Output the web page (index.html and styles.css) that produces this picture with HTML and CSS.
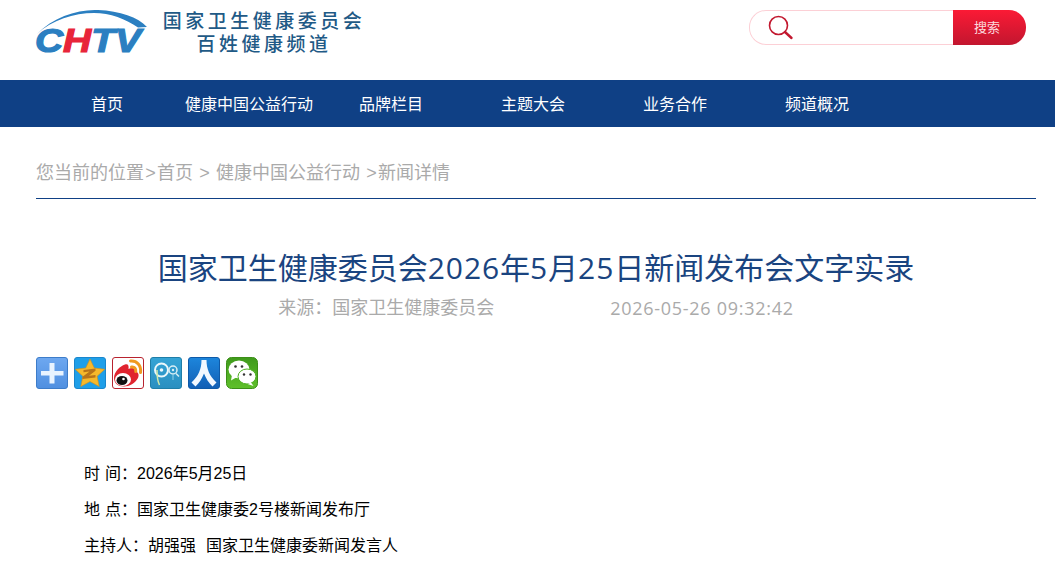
FILE: index.html
```html
<!DOCTYPE html>
<html lang="zh-CN">
<head>
<meta charset="utf-8">
<title>国家卫生健康委员会2026年5月25日新闻发布会文字实录</title>
<link rel="stylesheet" href="styles.css">
</head>
<body>
<header class="top">
  <div class="brand">
    <svg class="logo" width="112" height="44" viewBox="0 0 112 44">
      <path d="M1 24C17 7 42-1 62 0c22 1 40 7 49 17l-9 .5C90 9 74 3 58 3 38 3 16 10 1 24Z" fill="#2b7fc1"/>
      <text x="-1" y="42" textLength="106" lengthAdjust="spacingAndGlyphs" class="logo-text"><tspan class="logo-blue">C</tspan><tspan class="logo-red">H</tspan><tspan class="logo-blue">TV</tspan></text>
    </svg>
    <div class="brand-name">
      <div class="brand-line">国家卫生健康委员会</div>
      <div class="brand-line">百姓健康频道</div>
    </div>
  </div>
  <form class="search">
    <div class="search-field">
      <svg width="26" height="26" viewBox="0 0 26 26"><circle cx="10.500" cy="10.500" r="9" fill="none" stroke="#c2182f" stroke-width="1.600"/><path d="M17 17l6.500 6" stroke="#c2182f" stroke-width="2.400" stroke-linecap="round"/></svg>
    </div>
    <div class="search-btn">搜索</div>
  </form>
</header>
<nav class="nav">
  <a class="nav-item">首页</a>
  <a class="nav-item">健康中国公益行动</a>
  <a class="nav-item">品牌栏目</a>
  <a class="nav-item">主题大会</a>
  <a class="nav-item">业务合作</a>
  <a class="nav-item">频道概况</a>
</nav>
<main class="main">
  <div class="crumb">您当前的位置<span class="gt">&gt;</span>首页 <span class="gt">&gt;</span> 健康中国公益行动 <span class="gt">&gt;</span>新闻详情</div>
  <h1 class="title">国家卫生健康委员会<span class="num">2026</span>年<span class="num">5</span>月<span class="num">25</span>日新闻发布会文字实录</h1>
  <div class="meta"><span>来源：国家卫生健康委员会</span><span class="num date">2026-05-26 09:32:42</span></div>
  <div class="share">
    <svg class="ico" viewBox="0 0 32 32"><defs><linearGradient id="g1" x1="0" y1="0" x2="0" y2="1"><stop offset="0" stop-color="#6ea8f0"/><stop offset="1" stop-color="#4f8fe0"/></linearGradient></defs><rect x=".5" y=".5" width="31" height="31" rx="2.500" fill="url(#g1)" stroke="#3d7cc9"/><path d="M13.500 6h5v8h9v4.500h-9v8h-5v-8h-8.500v-4.500h8.500z" fill="#e8f3ff"/></svg>
    <svg class="ico" viewBox="0 0 32 32"><rect x=".5" y=".5" width="31" height="31" rx="2.500" fill="#1f9fe8" stroke="#1a86cc"/><path d="M16 2l4.300 9 10.400 1.300-7.600 7 2.100 10.200-9.200-5-9.200 5 2.100-10.200-7.600-7 10.400-1.300z" fill="#f6b92b" stroke="#d98f12" stroke-width=".6"/><path d="M9.500 13l12-1.500v2.300l-6.500 5 6.500-.8v2.500l-13 1.500v-2.300l7-5.200-6 .7z" fill="#b8741a"/></svg>
    <svg class="ico" viewBox="0 0 32 32"><rect x=".5" y=".5" width="31" height="31" rx="2.500" fill="#fff" stroke="#b8232f"/><path d="M2 21C2 15 8 9 13 7.500c3-1 4 1 3.500 4.500 3-1.500 6.500-1.500 6.500 2 3 1 4.500 3.500 3 7-2.500 5-9 8.500-14 8.500-6 0-10-3.500-10-8.500z" fill="#e0242f"/><ellipse cx="11" cy="22.500" rx="8" ry="6.500" fill="#fff"/><ellipse cx="10" cy="23.500" rx="5.500" ry="4.500" fill="#111"/><circle cx="11.500" cy="22" r="1.300" fill="#fff"/><path d="M18.500 4c6.500-.5 11 4.500 10 11.500M19.500 10c3-.5 4.500 1.500 4.300 4.500" fill="none" stroke="#f09a22" stroke-width="3" stroke-linecap="round"/></svg>
    <svg class="ico" viewBox="0 0 32 32"><defs><linearGradient id="g4" x1="0" y1="0" x2="0" y2="1"><stop offset="0" stop-color="#35a4d6"/><stop offset="1" stop-color="#2a8fc0"/></linearGradient></defs><rect x=".5" y=".5" width="31" height="31" rx="2.500" fill="url(#g4)" stroke="#1f7ea8"/><circle cx="11.500" cy="13" r="6.500" fill="none" stroke="#eaf7fb" stroke-width="2"/><circle cx="11.500" cy="13" r="1.800" fill="#eaf7fb"/><path d="M7 13c0 6 .5 11 2.500 15" fill="none" stroke="#cfe8a8" stroke-width="1.500"/><circle cx="23" cy="13" r="4" fill="none" stroke="#d8eef5" stroke-width="1.500"/><circle cx="23" cy="13" r="1.200" fill="#d8eef5"/><path d="M26 16.500l3 3" stroke="#d8eef5" stroke-width="1.500"/><path d="M23 17v6" stroke="#8fd0e6" stroke-width="1"/></svg>
    <svg class="ico" viewBox="0 0 32 32"><defs><linearGradient id="g5" x1="0" y1="0" x2="0" y2="1"><stop offset="0" stop-color="#1d86dc"/><stop offset="1" stop-color="#125fb5"/></linearGradient></defs><rect x=".5" y=".5" width="31" height="31" rx="2.500" fill="url(#g5)" stroke="#0e5aa8"/><path d="M13.500 3h5c0 9 3 16 10 22.500l-4 4c-4-4-6.500-8-8.500-13-2 5-4.500 9-8.500 13l-4-4c7-6.500 10-13.500 10-22.500z" fill="#f2f8ff"/></svg>
    <svg class="ico" viewBox="0 0 32 32"><defs><linearGradient id="g6" x1="0" y1="0" x2="0" y2="1"><stop offset="0" stop-color="#3f9a1c"/><stop offset="1" stop-color="#5fc02a"/></linearGradient></defs><rect x=".5" y=".5" width="31" height="31" rx="5" fill="url(#g6)" stroke="#3c8f18"/><ellipse cx="13" cy="12.500" rx="10.500" ry="9" fill="#fff"/><path d="M6 18l-1 5.500 6-3.500z" fill="#fff"/><ellipse cx="21" cy="19.500" rx="9" ry="7.500" fill="#fff" stroke="#4fb022"/><path d="M25 25.500l2.500 3.500-6-2z" fill="#fff"/><circle cx="9.500" cy="9.500" r="1.300" fill="#333"/><circle cx="16" cy="9.500" r="1.300" fill="#333"/><circle cx="18" cy="17.500" r="1.200" fill="#333"/><circle cx="24.500" cy="17.500" r="1.200" fill="#333"/></svg>
  </div>
  <article class="body">
    <p>时 间：2026年5月25日</p>
    <p>地 点：国家卫生健康委2号楼新闻发布厅</p>
    <p>主持人：胡强强&nbsp; 国家卫生健康委新闻发言人</p>
  </article>
</main>
</body>
</html>
```
FILE: styles.css
```css
* { box-sizing: border-box; }
html, body { margin: 0; padding: 0; }
body {
  width: 1055px;
  height: 573px;
  overflow: hidden;
  background: #fff;
  font-family: "Liberation Sans", "Noto Sans CJK SC", sans-serif;
  color: #000;
}
.top {
  height: 80px;
  padding: 0 29px 0 36px;
  display: flex;
  justify-content: space-between;
  align-items: flex-start;
}
.brand { display: flex; padding-top: 10px; }
.logo { display: block; overflow: visible; }
.logo-text { font-family: "Liberation Sans", sans-serif; font-size: 34px; font-weight: 700; font-style: italic; stroke-width: 1.2px; }
.logo-blue { fill: #2b7fc1; stroke: #2b7fc1; }
.logo-red { fill: #e8253a; stroke: #e8253a; }
.brand-name {
  margin-left: 14px;
  width: 204px;
  color: #1f5a86;
  font-size: 19px;
  font-weight: 500;
  line-height: 23px;
  text-align: center;
  letter-spacing: 3.5px;
}
.brand-line { white-space: nowrap; }
.search { display: flex; width: 277px; height: 35px; margin-top: 10px; }
.search-field {
  flex: 1;
  border: 1px solid #fcd0d6;
  border-right: 0;
  border-radius: 17px 0 0 17px;
  padding: 4px 0 0 18px;
}
.search-field svg { display: block; }
.search-btn {
  width: 73px;
  border-radius: 0 17px 17px 0;
  background: linear-gradient(#fb1a35, #c2162f);
  color: #fbd9de;
  font-size: 13px;
  line-height: 35px;
  padding-left: 21px;
}
.nav { height: 47px; background: #0f4085; display: flex; padding-left: 36px; }
.nav-item {
  width: 142px;
  padding-top: 1px;
  color: #fff;
  font-size: 16px;
  line-height: 47px;
  text-align: center;
  white-space: nowrap;
}
.main { padding: 0 19px 0 36px; }
.crumb {
  height: 72px;
  padding-top: 33px;
  border-bottom: 1px solid #0f4085;
  color: #aaa;
  font-size: 18px;
  line-height: 26px;
}
.gt { padding: 0 1.25px; }
.title {
  margin: 49px 0 0;
  color: #1a4480;
  font-size: 30px;
  font-weight: 400;
  line-height: 40px;
  text-align: center;
}
.num { font-family: "Open Sans", sans-serif; letter-spacing: .03em; }
.date { letter-spacing: .04em; }
.meta {
  margin-top: 6px;
  display: flex;
  justify-content: center;
  gap: 116px;
  color: #aaa;
  font-size: 18px;
  line-height: 26px;
}
.share { margin-top: 36px; display: flex; gap: 6px; }
.ico { width: 32px; height: 32px; display: block; }
.body { margin-top: 67px; padding-left: 48px; font-size: 16px; line-height: 36px; word-spacing: .6px; }
.body p { margin: 0; }
```
